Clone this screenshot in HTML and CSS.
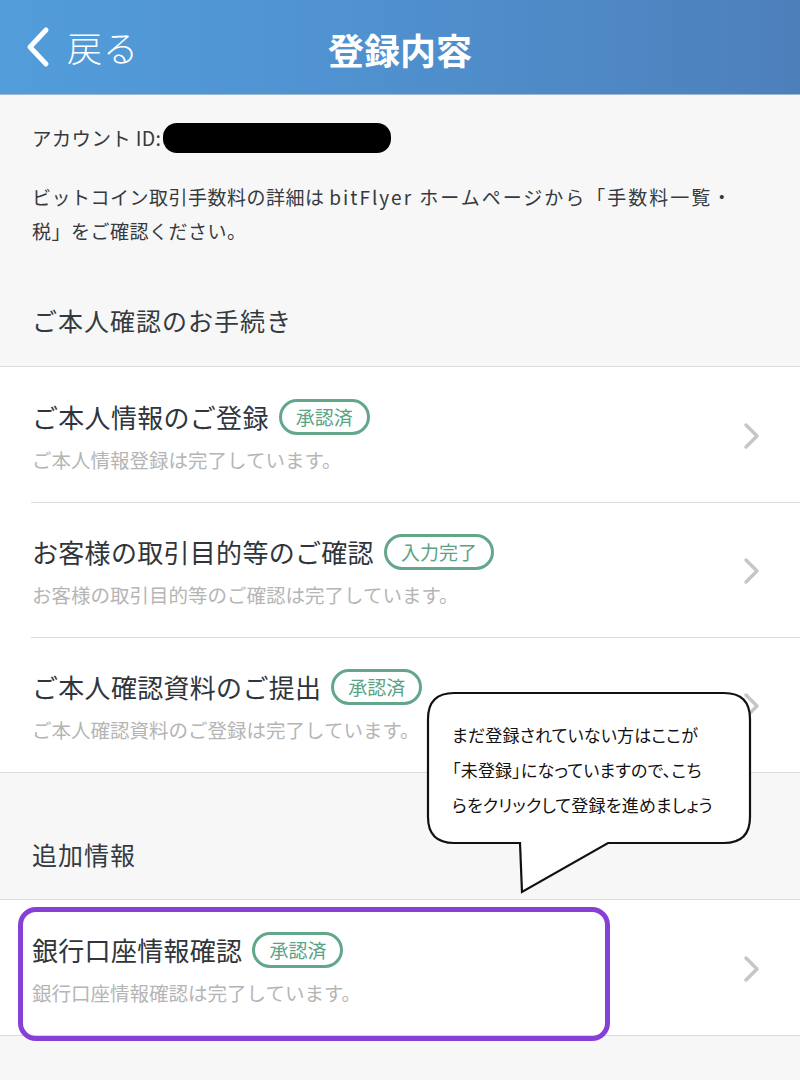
FILE: index.html
```html
<!DOCTYPE html>
<html lang="ja">
<head>
<meta charset="utf-8">
<title>登録内容</title>
<link rel="stylesheet" href="styles.css">
</head>
<body>
<header class="navbar">
  <div class="back">
    <svg class="back-icon" width="26" height="42" viewBox="0 0 26 42"><path d="M21 4 L5 21 L21 38" fill="none" stroke="#fff" stroke-width="5" stroke-linecap="round" stroke-linejoin="round"/></svg>
    <span class="back-label">戻る</span>
  </div>
  <h1 class="title">登録内容</h1>
</header>

<main class="content">
  <section class="intro">
    <p class="account">アカウント ID:<span class="redact"></span></p>
    <p class="desc">ビットコイン取引手数料の詳細は <span class="wide">bitFlyer ホームページから「手数料一覧・</span><br>税」をご確認ください。</p>
  </section>

  <h2 class="section-head">ご本人確認のお手続き</h2>
  <ul class="list">
    <li class="row">
      <div class="row-text">
        <div class="row-title">ご本人情報のご登録<span class="badge">承認済</span></div>
        <div class="row-sub">ご本人情報登録は完了しています。</div>
      </div>
      <svg class="chev" width="20" height="30" viewBox="0 0 20 30"><path d="M4 4 L15 15 L4 26" fill="none" stroke="#c6c6c6" stroke-width="3.5" stroke-linecap="round" stroke-linejoin="round"/></svg>
    </li>
    <li class="row">
      <div class="row-text">
        <div class="row-title">お客様の取引目的等のご確認<span class="badge">入力完了</span></div>
        <div class="row-sub">お客様の取引目的等のご確認は完了しています。</div>
      </div>
      <svg class="chev" width="20" height="30" viewBox="0 0 20 30"><path d="M4 4 L15 15 L4 26" fill="none" stroke="#c6c6c6" stroke-width="3.5" stroke-linecap="round" stroke-linejoin="round"/></svg>
    </li>
    <li class="row">
      <div class="row-text">
        <div class="row-title">ご本人確認資料のご提出<span class="badge">承認済</span></div>
        <div class="row-sub">ご本人確認資料のご登録は完了しています。</div>
      </div>
      <svg class="chev" width="20" height="30" viewBox="0 0 20 30"><path d="M4 4 L15 15 L4 26" fill="none" stroke="#c6c6c6" stroke-width="3.5" stroke-linecap="round" stroke-linejoin="round"/></svg>
    </li>
  </ul>

  <h2 class="section-head section-head--extra">追加情報</h2>
  <ul class="list">
    <li class="row">
      <div class="row-text">
        <div class="row-title">銀行口座情報確認<span class="badge">承認済</span></div>
        <div class="row-sub">銀行口座情報確認は完了しています。</div>
      </div>
      <svg class="chev" width="20" height="30" viewBox="0 0 20 30"><path d="M4 4 L15 15 L4 26" fill="none" stroke="#c6c6c6" stroke-width="3.5" stroke-linecap="round" stroke-linejoin="round"/></svg>
    </li>
  </ul>
</main>

<div class="highlight"></div>

<div class="bubble">
  <svg class="bubble-shape" width="328" height="206" viewBox="0 0 328 206">
    <path d="M28 2 H298 Q324 2 324 28 V126 Q324 152 298 152 H182 L96 201 L94 152 H28 Q2 152 2 126 V28 Q2 2 28 2 Z" fill="#fff" stroke="#111" stroke-width="2.2" stroke-linejoin="miter"/>
  </svg>
  <p class="bubble-text">まだ登録されていない方はここが<br>「未登録」になっていますので、こち<br>らをクリックして登録を進めましょう</p>
</div>
</body>
</html>
```

FILE: styles.css
```css
* { box-sizing: border-box; }
html, body { margin: 0; padding: 0; }
body {
  width: 800px;
  min-height: 1080px;
  background: #f7f7f7;
  font-family: "Noto Sans CJK JP", "Noto Sans", sans-serif;
  color: #353a40;
  position: relative;
  overflow: hidden;
}
.navbar {
  height: 95px;
  background: linear-gradient(90deg, #529dda 0%, #5091d0 45%, #4d80bb 100%);
  border-bottom: 1px solid #9fb9d3;
  display: flex;
  align-items: center;
  position: relative;
}
.back {
  display: flex;
  align-items: center;
  padding-left: 25px;
  gap: 16px;
}
.back-label {
  color: #fff;
  font-size: 35px;
  font-weight: 300;
  line-height: 40px;
  letter-spacing: 1px;
}
.title {
  position: absolute;
  left: 0; right: 0;
  text-align: center;
  margin: 0;
  color: #fff;
  font-size: 36px;
  font-weight: 700;
  line-height: 40px;
  top: 29px;
}
.intro { padding: 25px 32px 0 32px; }
.account {
  margin: 0;
  font-size: 19.5px;
  line-height: 36px;
  display: flex;
  align-items: center;
  letter-spacing: 0.3px;
}
.redact {
  display: inline-block;
  width: 228px;
  height: 30px;
  background: #000;
  border-radius: 14px;
  margin-left: 2px;
}
.desc {
  margin: 24px 0 0;
  font-size: 19px;
  line-height: 34px;
  letter-spacing: 0.5px;
}
.desc .wide { letter-spacing: 2px; }
.section-head {
  margin: 0;
  padding: 54px 32px 28px;
  font-size: 25px;
  font-weight: 400;
  line-height: 36px;
  letter-spacing: 1px;
  border-bottom: 1px solid #dcdcdc;
}
.section-head--extra {
  padding-top: 63px;
  padding-bottom: 27px;
}
.list {
  list-style: none;
  margin: 0;
  padding: 0;
  background: #fff;
  border-bottom: 1px solid #dcdcdc;
}
.row {
  display: flex;
  align-items: center;
  padding: 31px 38px 28px 32px;
  position: relative;
}
.row + .row::before {
  content: "";
  position: absolute;
  top: 0;
  left: 31px;
  right: 0;
  border-top: 1px solid #dcdcdc;
}
.row-text { flex: 1; }
.row-title {
  font-size: 26px;
  line-height: 38px;
  display: flex;
  align-items: center;
  color: #30353b;
  letter-spacing: 0.3px;
}
.badge {
  display: inline-block;
  margin-left: 10px;
  height: 36px;
  line-height: 30px;
  padding: 0 14px;
  border: 3px solid #63a78b;
  border-radius: 18px;
  color: #5aa386;
  font-size: 19px;
  letter-spacing: 0;
}
.row-sub {
  margin-top: 10px;
  font-size: 19.5px;
  line-height: 28px;
  color: #b5b5b5;
}
.chev { flex: none; }
.highlight {
  position: absolute;
  left: 18px;
  top: 907px;
  width: 592px;
  height: 134px;
  border: 5px solid #8640d6;
  border-radius: 18px;
}
.bubble {
  position: absolute;
  left: 426px;
  top: 691px;
  width: 328px;
  height: 206px;
}
.bubble-shape { position: absolute; left: 0; top: 0; }
.bubble-text {
  position: relative;
  margin: 0;
  padding: 26px 0 0 26px;
  font-size: 17px;
  line-height: 35px;
  color: #111;
  font-feature-settings: "palt";
  letter-spacing: 0.2px;
}
```
